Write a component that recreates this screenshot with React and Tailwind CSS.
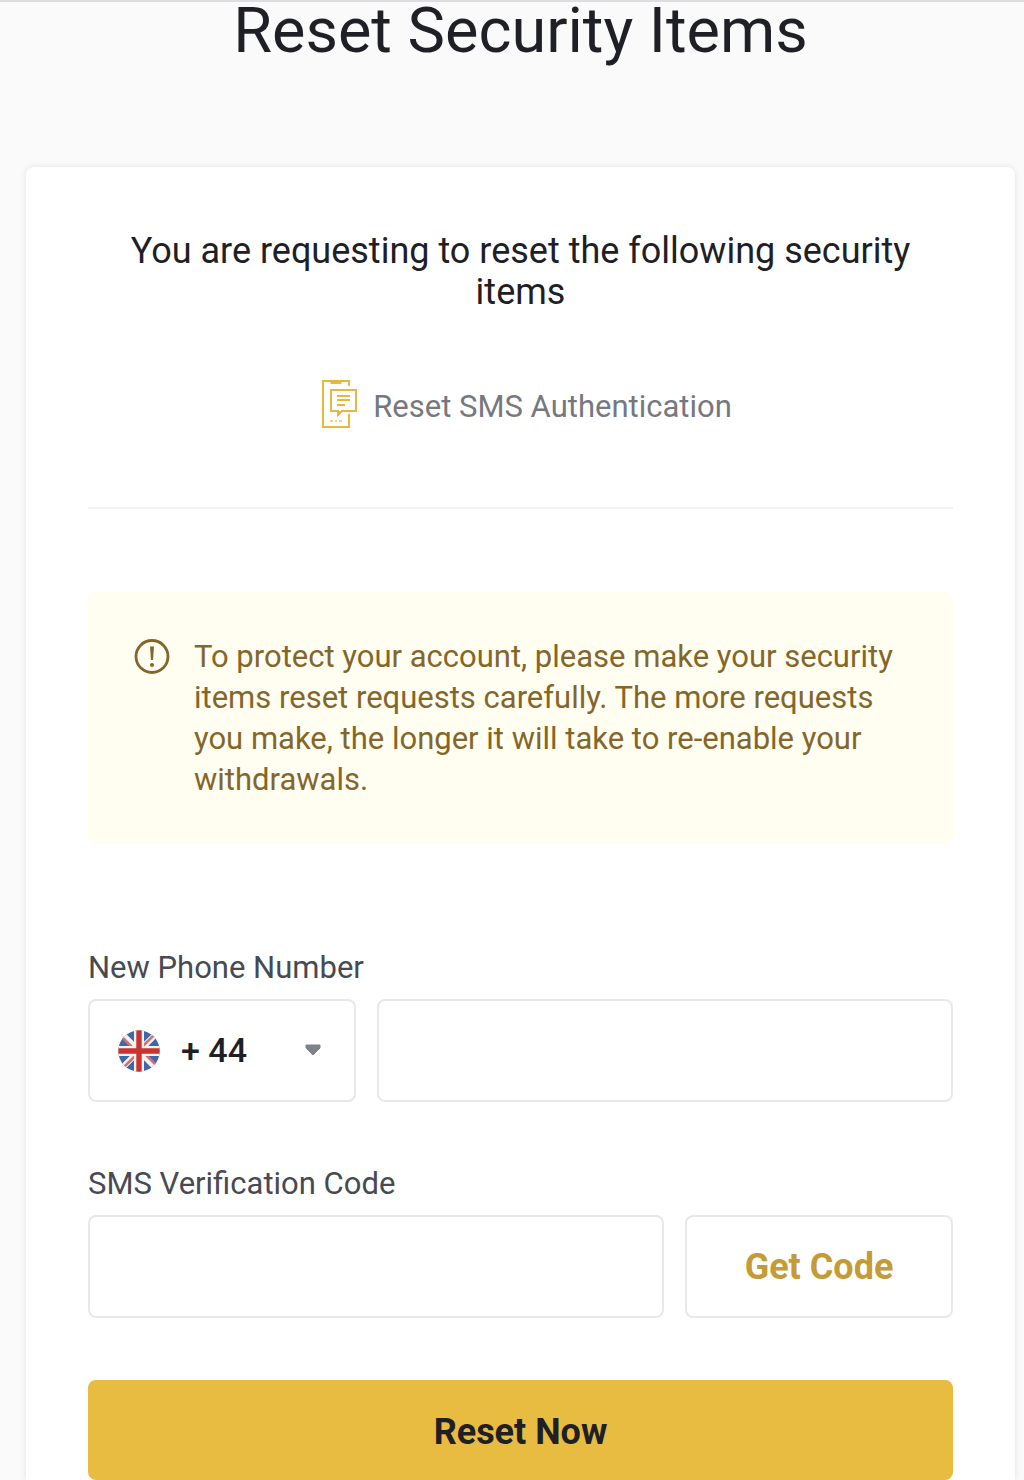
import React from "react";

function PhoneMessageIcon() {
  return (
    <svg width="36" height="50" viewBox="0 0 36 50" fill="none" stroke="#e6b83d" strokeWidth="2" aria-hidden="true">
      <path d="M28 6V1H2V47H28V34" />
      <path d="M8 0H22L20 4H10Z" fill="#e6b83d" stroke="none" />
      <path d="M10 10H35V31H21L17 35V31H10Z" />
      <path d="M17 31H22L17 36Z" fill="#e6b83d" stroke="none" />
      <path d="M16 16H29M16 20H29M16 25H24" />
      <path d="M9 41H12M14 41H16M18 41H21" strokeWidth="1.5" opacity=".8" />
    </svg>
  );
}

function WarningIcon() {
  return (
    <svg width="36" height="36" viewBox="0 0 36 36" fill="none" stroke="#84662b" className="shrink-0" aria-hidden="true">
      <circle cx="18" cy="17.5" r="16" strokeWidth="2.8" />
      <path d="M16 7.5H20L19 21H17Z" fill="#84662b" stroke="none" />
      <circle cx="18" cy="26" r="2" fill="#84662b" stroke="none" />
    </svg>
  );
}

function UkFlag() {
  return (
    <svg width="42" height="42" viewBox="0 0 42 42" aria-hidden="true">
      <clipPath id="flag-circle">
        <circle cx="21" cy="21" r="20.7" />
      </clipPath>
      <g clipPath="url(#flag-circle)">
        <path d="M0 0H42V42H0Z" fill="#4066ad" />
        <path d="M2 2L40 40M40 2L2 40" stroke="#f7f3e8" strokeWidth="6" />
        <path d="M4 7L15 18M27 24L38 35M36 5L25 16M17 26L6 37" stroke="#d0727b" strokeWidth="2.5" />
        <path d="M21 0V42M0 21H42" stroke="#f7f3e8" strokeWidth="10" />
        <path d="M21 0V42M0 21H42" stroke="#c83434" strokeWidth="5.4" />
      </g>
    </svg>
  );
}

export default function App() {
  return (
    <div className="min-h-screen border-t-2 border-[#dcdce1] bg-[#fafafa] pr-[9px] pl-[26px] font-['Roboto','Liberation_Sans',sans-serif] text-[#1e2026]">
      <h1 className="text-center text-[63px] leading-[58px]">Reset Security Items</h1>
      <main className="mt-[107px] rounded-t-lg bg-white px-[62px] pt-16 shadow-[0_0_6px_rgba(0,0,0,0.1)]">
        <h2 className="px-8 text-center text-[36px] leading-[41px]">
          You are requesting to reset the following security items
        </h2>
        <div className="mt-[65px] flex items-center justify-center gap-4 pl-3 text-[31px] leading-[50px] text-[#76787f]">
          <PhoneMessageIcon />
          <span className="pt-1">Reset SMS Authentication</span>
        </div>
        <hr className="mt-[75px] border-t-2 border-[#f3f3f4]" />
        <div role="note" className="mt-[83px] flex gap-6 rounded-lg bg-[#fffef0] py-11 pr-11 pl-[46px] text-[31px] leading-[41px] text-[#84662b]">
          <div className="pt-[3px]">
            <WarningIcon />
          </div>
          <p>
            To protect your account, please make your security items reset requests carefully. The more requests you
            make, the longer it will take to re-enable your withdrawals.
          </p>
        </div>
        <form className="mt-[104px]" onSubmit={(e) => e.preventDefault()}>
          <label htmlFor="phone" className="block text-[31px] leading-10 text-[#474a52]">
            New Phone Number
          </label>
          <div className="mt-[11px] flex gap-[21px]">
            <div className="relative w-[268px] shrink-0">
              <select
                aria-label="Country code"
                className="h-[103px] w-full appearance-none rounded-lg border-2 border-[#e6e8ea] bg-white pl-[91px] text-[34px] font-medium text-[#1e2026]"
              >
                <option>+ 44</option>
              </select>
              <div className="pointer-events-none absolute inset-y-0 left-[30px] flex items-center">
                <UkFlag />
              </div>
              <div className="pointer-events-none absolute inset-y-0 right-[35px] flex items-center">
                <svg width="16" height="13" viewBox="0 0 16 13" aria-hidden="true">
                  <path d="M1 1H15V4L8 11L1 4Z" fill="#808289" stroke="#808289" strokeLinejoin="round" />
                </svg>
              </div>
            </div>
            <input id="phone" type="tel" className="h-[103px] min-w-0 flex-1 rounded-lg border-2 border-[#e6e8ea] px-6 text-[36px]" />
          </div>
          <label htmlFor="code" className="mt-[62px] block text-[31px] leading-10 text-[#474a52]">
            SMS Verification Code
          </label>
          <div className="mt-[11px] flex gap-[21px]">
            <input id="code" type="text" className="h-[103px] min-w-0 flex-1 rounded-lg border-2 border-[#e6e8ea] px-6 text-[36px]" />
            <button type="button" className="h-[103px] w-[268px] shrink-0 rounded-lg border-2 border-[#e6e8ea] text-[36px] font-bold text-[#c49b37]">
              Get Code
            </button>
          </div>
          <button type="submit" className="mt-[62px] block h-[100px] w-full rounded-lg bg-[#e8bb41] pt-1 text-[36px] font-bold text-[#1e2026]">
            Reset Now
          </button>
        </form>
      </main>
    </div>
  );
}
